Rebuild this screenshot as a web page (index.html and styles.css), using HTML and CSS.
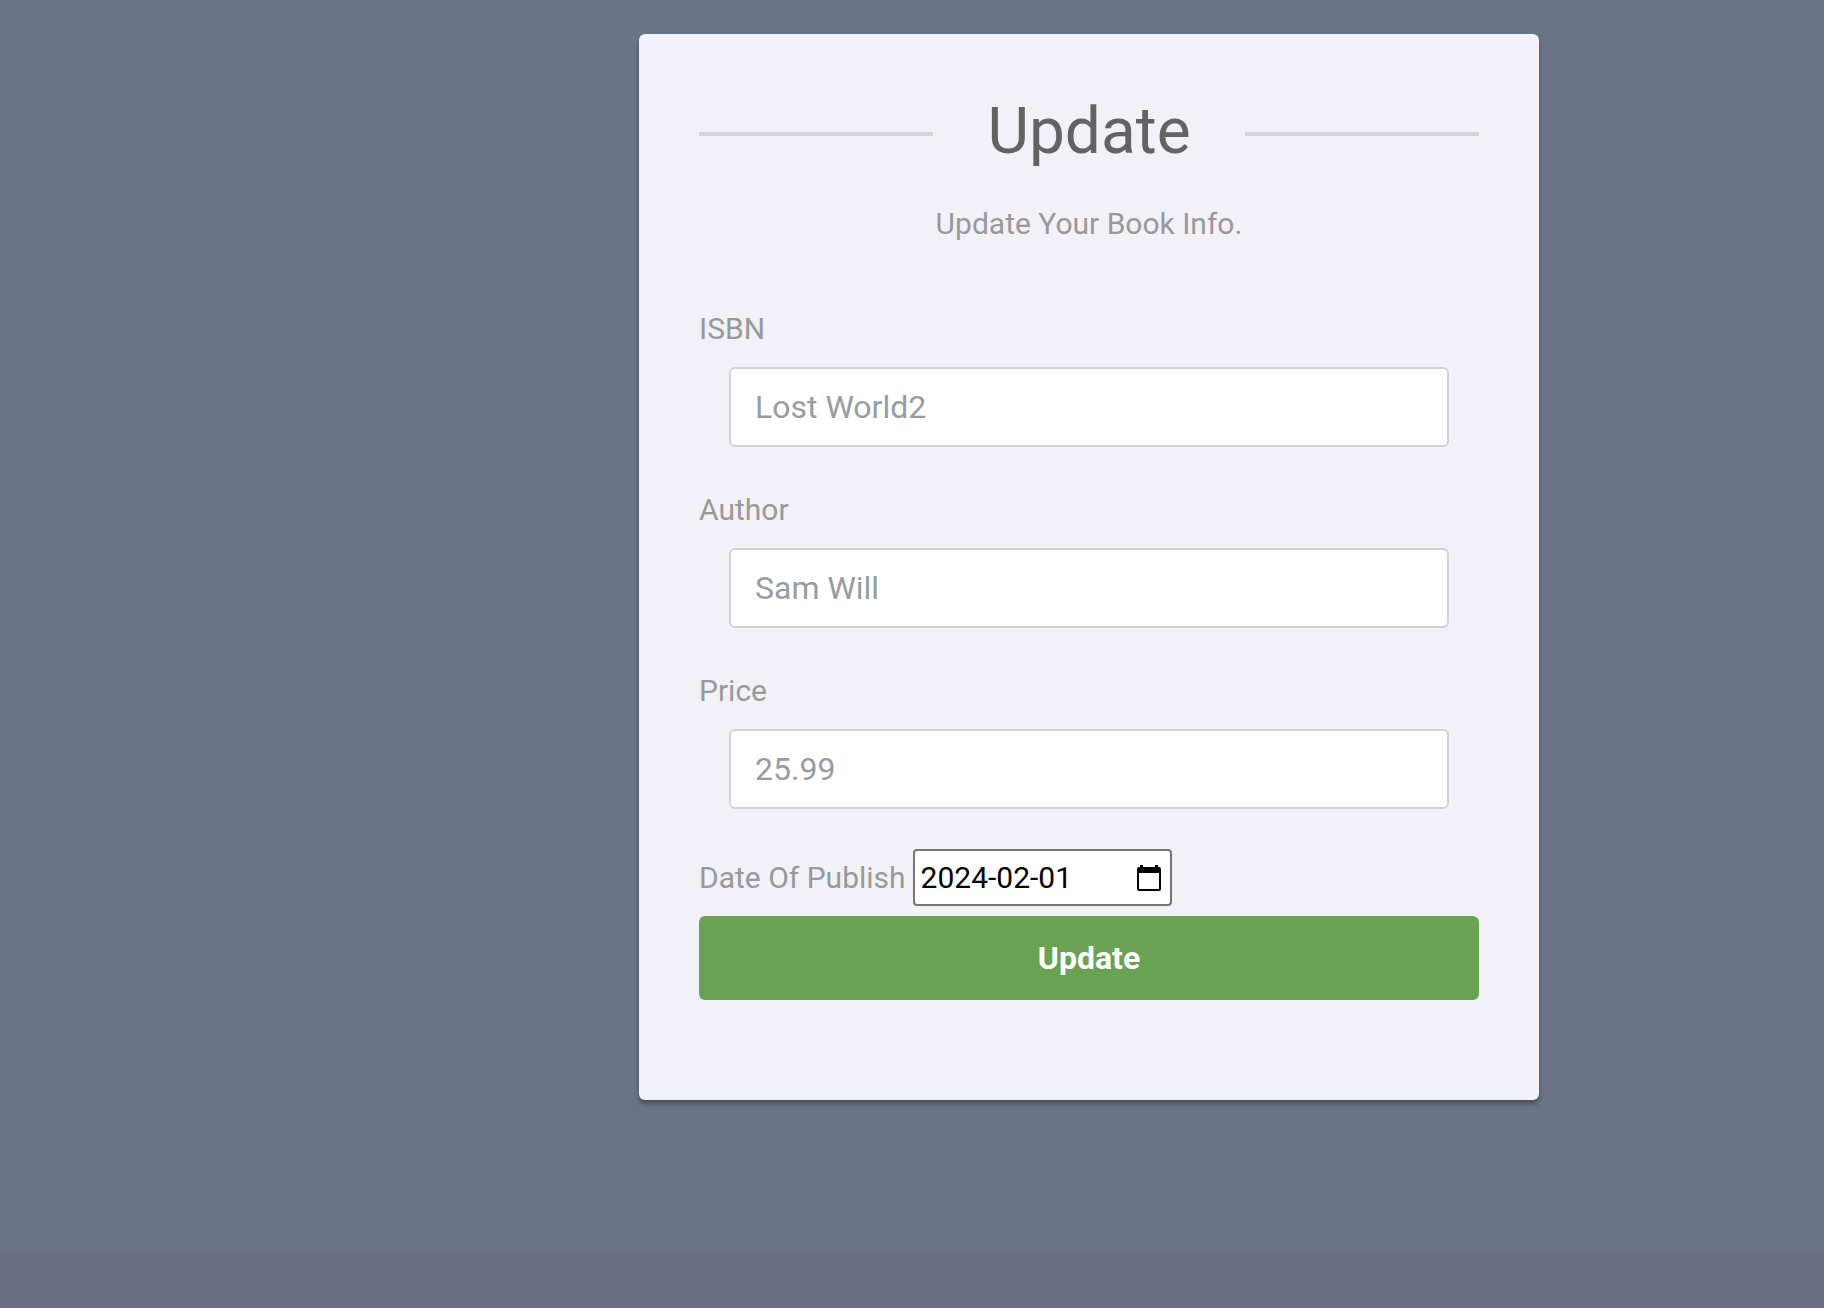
FILE: index.html
```html
<!DOCTYPE html>
<html lang="en">
<head>
<meta charset="utf-8">
<meta name="viewport" content="width=device-width, initial-scale=1">
<title>Update</title>
<link rel="stylesheet" href="styles.css">
</head>
<body>
<main class="update-form">
  <form class="card">
    <h2 class="title">Update</h2>
    <p class="hint-text">Update Your Book Info.</p>
    <div class="form-group">
      <label for="isbn">ISBN</label>
      <input class="form-control" type="text" id="isbn" name="isbn" value="Lost World2">
    </div>
    <div class="form-group">
      <label for="author">Author</label>
      <input class="form-control" type="text" id="author" name="author" value="Sam Will">
    </div>
    <div class="form-group">
      <label for="price">Price</label>
      <input class="form-control" type="text" id="price" name="price" value="25.99">
    </div>
    <div class="date-row">
      <label for="published">Date Of Publish</label>
      <div class="date-field">
        <input class="date-input" type="text" id="published" name="published" value="2024-02-01">
        <button class="date-picker" type="button" aria-label="Show date picker">
          <svg width="24" height="26" viewBox="0 0 24 26" aria-hidden="true">
            <path fill-rule="evenodd" d="M3 0h3v2h12V0h3v2h1a2 2 0 0 1 2 2v20a2 2 0 0 1-2 2H2a2 2 0 0 1-2-2V4a2 2 0 0 1 2-2h1zM2 8v16h20V8z"/>
          </svg>
        </button>
      </div>
    </div>
    <button class="btn" type="submit">Update</button>
  </form>
</main>
</body>
</html>
```
FILE: styles.css
```css
* {
  box-sizing: border-box;
}

body {
  margin: 0;
  min-height: 100vh;
  background: linear-gradient(to top, #6c7087 54px, #6b7387 58px);
  color: #999;
  font-family: Roboto, "Liberation Sans", sans-serif;
  font-size: 30px;
  line-height: 45px;
}

.update-form {
  margin-left: calc(50% - 273px);
  padding: 34px 0 60px;
  max-width: 900px;
}

.card {
  padding: 60px 60px 100px;
  border-radius: 6px;
  background: #f2f1f7;
  box-shadow: 0 4px 4px rgba(0, 0, 0, 0.3);
}

.title {
  display: flex;
  align-items: center;
  justify-content: space-between;
  margin: 0 0 31px;
  color: #636363;
  font-size: 64px;
  font-weight: 400;
  line-height: 76px;
  text-align: center;
}

.title::before,
.title::after {
  content: "";
  width: 30%;
  height: 4px;
  margin-top: 4px;
  background: #d4d4d4;
}

.hint-text {
  margin: 0 0 60px;
  text-align: center;
}

.form-group {
  display: flex;
  flex-direction: column;
  gap: 16px;
  margin-bottom: 40px;
}

.form-control {
  height: 80px;
  margin: 0 30px;
  padding: 12px 24px;
  border: 2px solid #ced4da;
  border-radius: 6px;
  background: #fff;
  color: #969da2;
  font: inherit;
  font-size: 32px;
}

.date-row {
  display: flex;
  align-items: center;
  gap: 7px;
  margin-bottom: 10px;
}

.date-field {
  display: flex;
  align-items: center;
  justify-content: space-between;
  width: 259px;
  height: 57px;
  padding: 0 9px 0 6px;
  border: 2px solid #767676;
  border-radius: 4px;
  background: #fff;
}

.date-input {
  width: 180px;
  padding: 0;
  border: 0;
  outline: 0;
  background: none;
  color: #000;
  font: inherit;
}

.date-picker {
  display: flex;
  padding: 0;
  border: 0;
  background: none;
  color: #000;
}

.btn {
  display: block;
  width: 100%;
  height: 84px;
  border: 0;
  border-radius: 6px;
  background: #6aa253;
  color: #fff;
  font: inherit;
  font-size: 32px;
  font-weight: 700;
}
```
